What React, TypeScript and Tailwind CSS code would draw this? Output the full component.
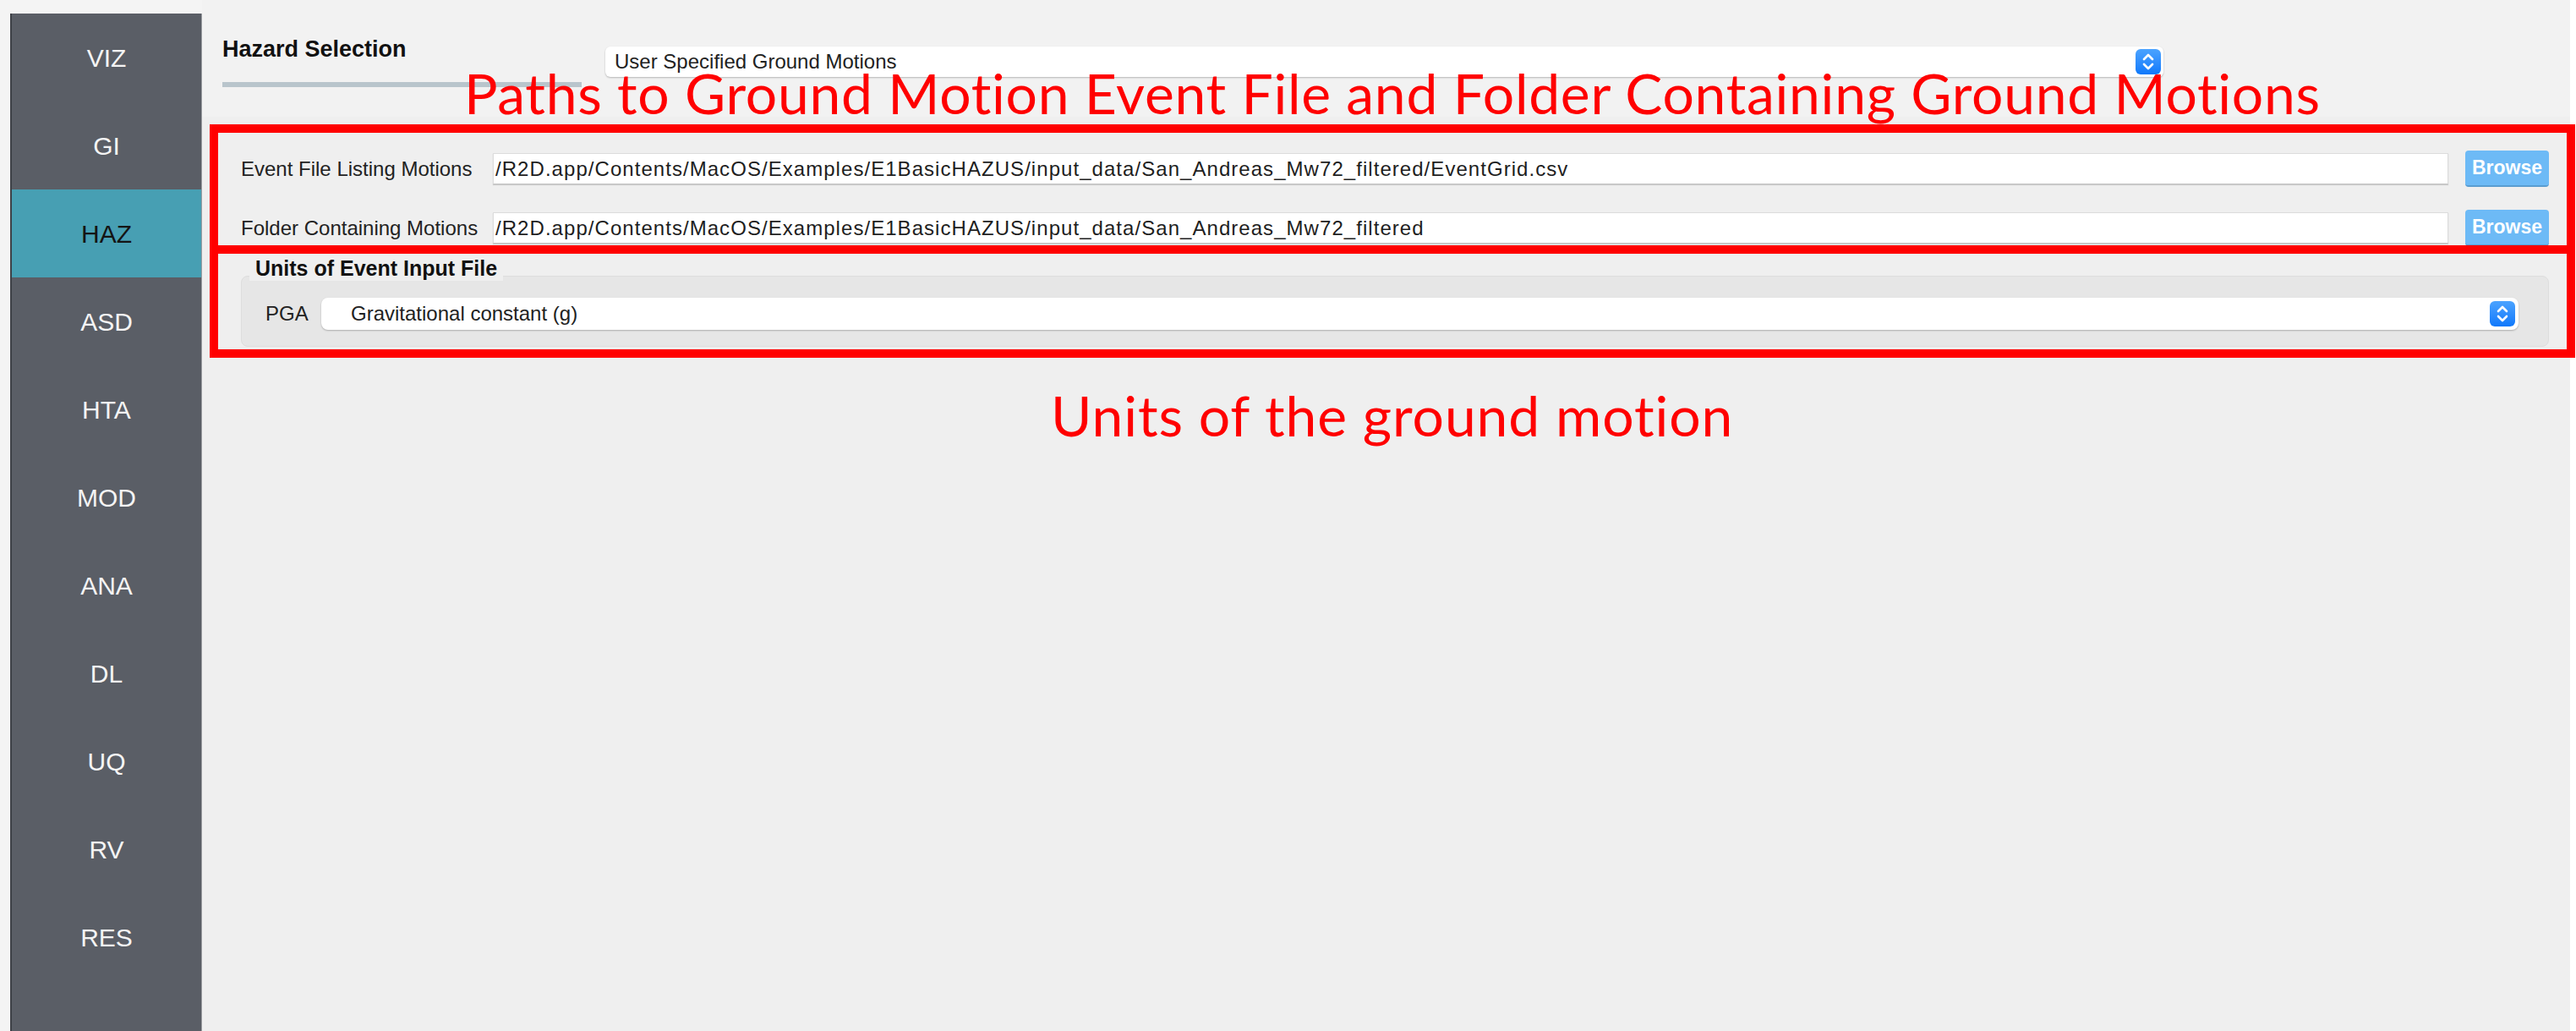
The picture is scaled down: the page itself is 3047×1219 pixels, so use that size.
const tabs = ['VIZ', 'GI', 'HAZ', 'ASD', 'HTA', 'MOD', 'ANA', 'DL', 'UQ', 'RV', 'RES'];

const EVENT_PATH =
  '/R2D.app/Contents/MacOS/Examples/E1BasicHAZUS/input_data/San_Andreas_Mw72_filtered/EventGrid.csv';
const FOLDER_PATH = '/R2D.app/Contents/MacOS/Examples/E1BasicHAZUS/input_data/San_Andreas_Mw72_filtered';

const Stepper = () => (
  <div className="w-[30px] h-[30px] rounded-[6px] bg-gradient-to-b from-[#4aa3ff] to-[#0b78fb] flex items-center justify-center shrink-0">
    <svg width="22" height="26" viewBox="0 0 22 26" fill="none" stroke="white" strokeWidth="2.6" strokeLinecap="round" strokeLinejoin="round">
      <path d="M6 10 L11 5 L16 10" />
      <path d="M6 16 L11 21 L16 16" />
    </svg>
  </div>
);

const PathRow = ({ label, value }: { label: string; value: string }) => (
  <div className="flex items-center h-[43px]">
    <div className="w-[298px] shrink-0 text-[24px] text-[#222]">{label}</div>
    <div className="flex-1 h-[37px] bg-white border border-[#dcdcdc] border-b-[#c4c4c4] shadow-[0_1px_1px_rgba(0,0,0,0.15)] flex items-center pl-[2px] text-[24px] tracking-[1.05px] text-[#1e1e1e] whitespace-nowrap overflow-hidden">
      {value}
    </div>
    <button className="ml-[20px] w-[99px] h-[43px] rounded-[4px] bg-[#6dbaf6] border-b-2 border-[#5a9dd0] text-white font-bold text-[23px] flex items-center justify-center">
      Browse
    </button>
  </div>
);

export default function App() {
  return (
    <div className="relative w-[3047px] h-[1219px] bg-white overflow-hidden font-[family-name:'Liberation_Sans',Arial,sans-serif]">
      <div className="flex w-[3040px] h-full bg-[#efefef]">
        {/* side nav */}
        <div className="w-[12px] shrink-0 bg-[#f4f4f4]" />
        <div className="w-[227px] shrink-0 pt-[16px] bg-[#f4f4f4]">
          <div className="h-full bg-[#5a5e66] border-l-2 border-[#3e4147] border-r border-r-[#9b9da1]">
            {tabs.map((t) => (
              <div
                key={t}
                className={
                  t === 'HAZ'
                    ? 'h-[104px] flex items-center justify-center bg-[#479fb3] text-[#141414] text-[30px]'
                    : 'h-[104px] flex items-center justify-center text-[#f4f4f4] text-[30px]'
                }
              >
                {t}
              </div>
            ))}
          </div>
        </div>

        {/* main panel */}
        <div className="flex-1 flex flex-col">
          <div className="h-[138px] bg-[#f2f2f2] flex items-start pl-[24px]">
            <div className="w-[425px] pt-[43px]">
              <div className="text-[27px] leading-[30px] font-bold text-[#111]">Hazard Selection</div>
              <div className="mt-[24px] h-[6px] bg-[#b9c5cc]" />
            </div>
            <div className="ml-[28px] mt-[55px] w-[1843px] h-[36px] rounded-[6px] bg-white shadow-[0_1px_2px_rgba(0,0,0,0.25)] flex items-center justify-between pl-[11px] pr-[3px]">
              <span className="text-[24px] text-[#222]">User Specified Ground Motions</span>
              <Stepper />
            </div>
          </div>

          <div className="pl-[46px] pr-[25px] pt-[40px] flex flex-col">
            <div className="flex flex-col gap-[27px]">
              <PathRow label="Event File Listing Motions" value={EVENT_PATH} />
              <PathRow label="Folder Containing Motions" value={FOLDER_PATH} />
            </div>

            <div className="mt-[11px] flex flex-col">
              <div className="relative z-10 ml-[10px] w-fit px-[7px] bg-[#efefef] text-[25px] leading-[30px] font-bold text-[#111]">
                Units of Event Input File
              </div>
              <div className="-mt-[6px] h-[84px] rounded-[8px] bg-[#e6e6e6] border border-[#dddddd] flex items-center pl-[28px] pr-[35px] pt-[6px]">
                <div className="w-[66px] shrink-0 text-[24px] text-[#222]">PGA</div>
                <div className="flex-1 h-[38px] rounded-[8px] bg-white shadow-[0_1px_2px_rgba(0,0,0,0.25)] flex items-center justify-between pl-[35px] pr-[4px]">
                  <span className="text-[24px] text-[#222]">Gravitational constant (g)</span>
                  <Stepper />
                </div>
              </div>
            </div>
          </div>
        </div>
      </div>

      {/* annotations drawn over the screenshot */}
      <div className="absolute left-[248px] top-[147px] w-[2798px] h-[153px] border-[10px] border-[#ff0000]" />
      <div className="absolute left-[248px] top-[290px] w-[2798px] h-[133px] border-[10px] border-[#ff0000]" />
      <div className="absolute left-[549px] top-[77px] text-[66px] leading-[66px] tracking-[0.7px] text-[#ff0000] whitespace-nowrap font-[family-name:Lato,sans-serif]">
        Paths to Ground Motion Event File and Folder Containing Ground Motions
      </div>
      <div className="absolute left-[1243px] top-[458px] text-[66px] leading-[66px] tracking-[0.9px] text-[#ff0000] whitespace-nowrap font-[family-name:Lato,sans-serif]">
        Units of the ground motion
      </div>
    </div>
  );
}
